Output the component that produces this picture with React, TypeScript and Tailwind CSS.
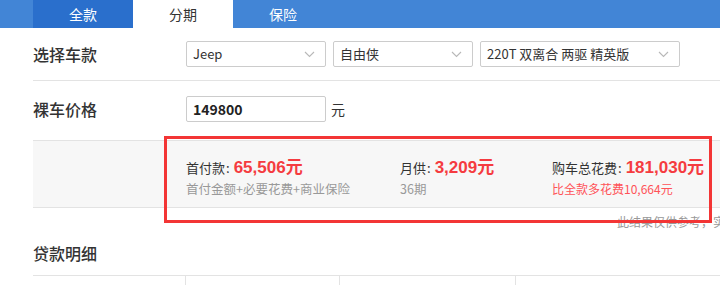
import React from "react";

const Chevron = () => (
  <svg width="11" height="7" viewBox="0 0 11 7" fill="none" className="shrink-0">
    <path d="M1 1l4.5 4.5L10 1" stroke="#b8b8b8" strokeWidth="1.1" />
  </svg>
);

const Select = ({ text, w }: { text: string; w: string }) => (
  <div
    className={`${w} h-[26px] border border-[#cccccc] rounded-[2px] bg-white flex items-center justify-between pl-[6px] pr-[10px] text-[13px] text-[#333]`}
  >
    <span>{text}</span>
    <Chevron />
  </div>
);

const Num = ({ children }: { children: React.ReactNode }) => (
  <span
    className="text-[17px] font-bold text-[#f53b40]"
    style={{ fontFamily: '"Liberation Sans", "Noto Sans CJK SC", sans-serif' }}
  >
    {children}
  </span>
);

const Label = ({ text }: { text: string }) => (
  <span className="text-[13px] text-[#333]">
    {text}
    <span className="ml-[1px] mr-[4px]">:</span>
  </span>
);

export default function App() {
  return (
    <div
      className="relative w-[720px] h-[285px] overflow-hidden bg-white"
      style={{ fontFamily: '"Noto Sans CJK SC", "Microsoft YaHei", sans-serif' }}
    >
      {/* tabs */}
      <div className="flex h-[28px] bg-[#4285d6] pl-[33px] text-[14px] leading-[28px]">
        <div className="w-[100px] text-center bg-[#2a6fcc] text-white">全款</div>
        <div className="w-[100px] text-center bg-white text-[#333]">分期</div>
        <div className="w-[100px] text-center text-white">保险</div>
      </div>

      <div className="pl-[33px]">
        {/* row 1 */}
        <div className="flex items-center h-[53px] border-b border-[#e3e3e3]">
          <div className="w-[153px] text-[16px] text-[#333] font-medium">选择车款</div>
          <div className="flex gap-[7px]">
            <Select text="Jeep" w="w-[140px]" />
            <Select text="自由侠" w="w-[140px]" />
            <Select text="220T 双离合 两驱 精英版" w="w-[200px]" />
          </div>
        </div>

        {/* row 2 */}
        <div className="flex items-center pt-[15px] pb-[18px]">
          <div className="w-[153px] text-[16px] text-[#333] font-medium">裸车价格</div>
          <div className="w-[140px] h-[26px] border border-[#cccccc] rounded-[2px] flex items-center pl-[6px] text-[14px] font-bold text-[#222]">
            149800
          </div>
          <span className="ml-[5px] text-[14px] text-[#333]">元</span>
        </div>

        {/* result band */}
        <div className="h-[68px] bg-[#f7f7f7] border-y border-[#e3e3e3] pl-[153px] flex pt-[14px]">
          <div className="w-[214px]">
            <div className="flex items-baseline h-[24px]">
              <Label text="首付款" />
              <Num>65,506元</Num>
            </div>
            <div className="text-[12.5px] text-[#999] leading-[20px]">首付金额+必要花费+商业保险</div>
          </div>
          <div className="w-[152px]">
            <div className="flex items-baseline h-[24px]">
              <Label text="月供" />
              <Num>3,209元</Num>
            </div>
            <div className="text-[12.5px] text-[#999] leading-[20px]">36期</div>
          </div>
          <div>
            <div className="flex items-baseline h-[24px]">
              <Label text="购车总花费" />
              <Num>181,030元</Num>
            </div>
            <div className="text-[12px] text-[#ff5257] leading-[20px]">比全款多花费10,664元</div>
          </div>
        </div>

        {/* disclaimer */}
        <div className="pl-[584px] pt-[4px] whitespace-nowrap text-[12px] leading-[20px] text-[#999]">
          此结果仅供参考，实际应缴费以当地为准
        </div>

        {/* loan details title */}
        <div className="mt-[9px] text-[16px] leading-[24px] text-[#333] font-medium">贷款明细</div>

        <div className="mt-[10px] flex border-t border-[#e3e3e3] h-[30px]">
          <div className="w-[152px]" />
          <div className="w-[154px] border-l border-[#e3e3e3]" />
          <div className="w-[176px] border-l border-[#e3e3e3]" />
          <div className="flex-1 border-l border-[#e3e3e3]" />
        </div>
      </div>

      {/* red annotation box */}
      <div className="absolute left-[164px] top-[136px] w-[548px] h-[87px] border-[3px] border-[#f33535] pointer-events-none" />
    </div>
  );
}
